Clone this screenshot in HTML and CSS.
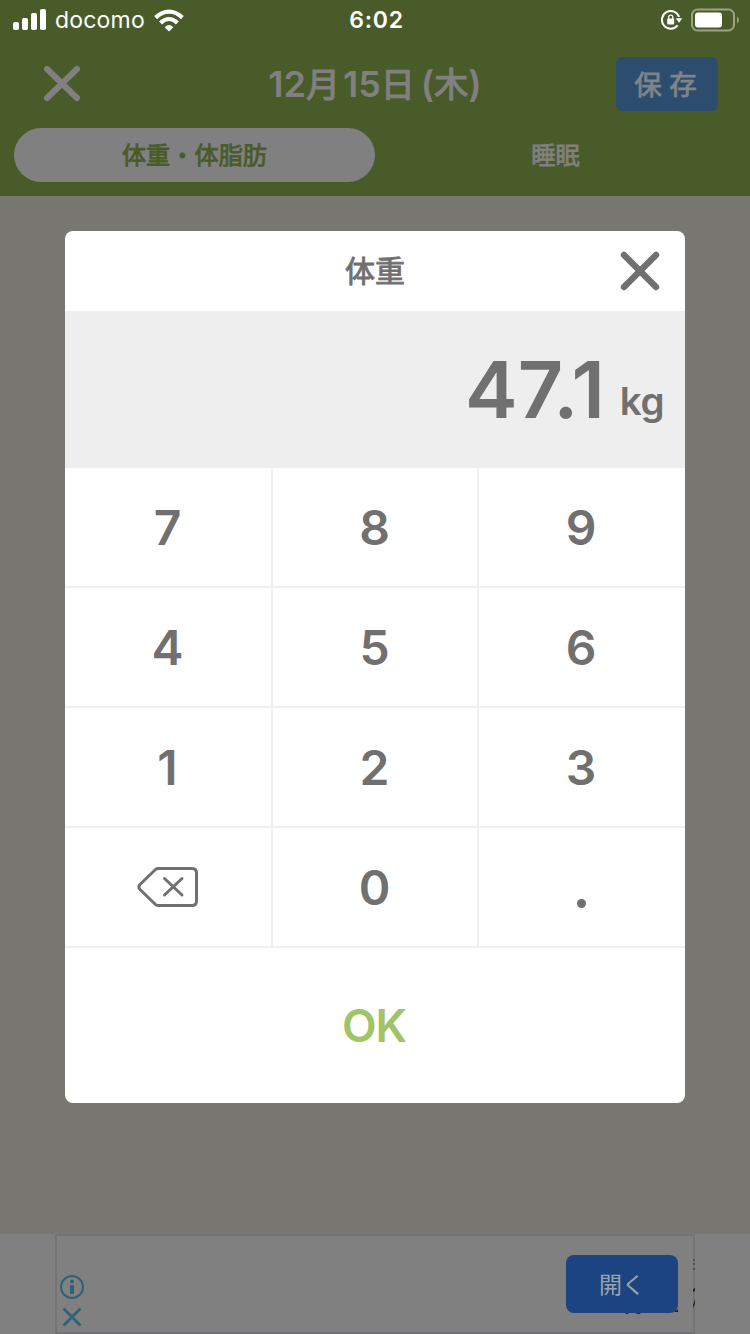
FILE: index.html
```html
<!DOCTYPE html>
<html lang="ja">
<head>
<meta charset="utf-8">
<title>体重</title>
<link rel="stylesheet" href="styles.css">
</head>
<body>
<div class="screen">
  <header class="header">
    <div class="status">
      <div class="status-left">
        <svg class="signal" width="33" height="22" viewBox="0 0 33 22" fill="#fff"><rect x="0" y="13" width="6" height="8" rx="1.8"/><rect x="9" y="9" width="6" height="12" rx="1.8"/><rect x="18" y="4" width="6" height="17" rx="1.8"/><rect x="27" y="0" width="6" height="21" rx="1.8"/></svg>
        <span class="carrier">docomo</span>
        <svg class="wifi" width="30" height="23" viewBox="0 0 30 23" fill="none" stroke="#fff" stroke-width="4.2"><path d="M1.6 8.6Q8 2.6 15 2.6T28.4 8.6"/><path d="M6.6 14Q10.5 10 15 10T23.4 14"/><path d="M10.6 18.2Q15 14 19.4 18.2L15 22.6Z" fill="#fff" stroke="none"/></svg>
      </div>
      <span class="clock">6:02</span>
      <div class="status-right">
        <svg width="22" height="20" viewBox="0 0 22 20"><path d="M18.1 7A8.8 8.8 0 1 0 16.6 15.4" fill="none" stroke="#fff" stroke-width="2"/><path d="M14.6 8.2H21.3L18.1 12.8Z" fill="#fff"/><rect x="6.2" y="8.4" width="7" height="6" rx="1" fill="#fff"/><path d="M7.6 9V7.2a2.1 2.1 0 0 1 4.2 0V9" fill="none" stroke="#fff" stroke-width="1.3"/></svg>
        <svg width="50" height="24" viewBox="0 0 50 24"><rect x="2" y="1.5" width="42" height="21" rx="5.5" fill="none" stroke="#99a484" stroke-width="2"/><rect x="5" y="4.5" width="27" height="15" rx="3" fill="#fff"/><path d="M47 8.5C49.5 9.5 49.5 14.500 47 15.500Z" fill="#99a484"/></svg>
      </div>
    </div>
    <div class="nav">
      <svg class="nav-close" width="40" height="40" viewBox="0 0 40 40" stroke="#808080" stroke-width="6" stroke-linecap="round"><path d="M5 5L35 34M35 5L5 34"/></svg>
      <h1 class="date"><span>12</span><span class="kanji">月</span><span class="day">15</span><span class="kanji">日</span><span class="paren">(</span><span class="kanji">木</span><span>)</span></h1>
      <button class="save">保 存</button>
    </div>
    <div class="tabs">
      <div class="tab tab-active">体重・体脂肪</div>
      <div class="tab">睡眠</div>
    </div>
  </header>
  <main class="content">
    <section class="modal">
      <div class="modal-head">
        <h2 class="modal-title">体重</h2>
        <svg class="modal-close" width="40" height="40" viewBox="0 0 40 40" stroke="#707070" stroke-width="6.4" stroke-linecap="round"><path d="M4 4L36 36M36 4L4 36"/></svg>
      </div>
      <div class="display"><span class="value">47.1</span><span class="unit">kg</span></div>
      <div class="keys">
        <div class="key">7</div><div class="key">8</div><div class="key">9</div>
        <div class="key">4</div><div class="key">5</div><div class="key">6</div>
        <div class="key">1</div><div class="key">2</div><div class="key">3</div>
        <div class="key"><svg width="62" height="42" viewBox="0 0 62 42" fill="none" stroke="#707070" stroke-width="3" stroke-linejoin="round" stroke-linecap="round"><path d="M21 2.500H55Q59.500 2.500 59.500 7V35Q59.500 39.500 55 39.500H21Q19.500 39.500 18.500 38.500L3 23.500Q0.800 21 3 18.500L18.500 3.500Q19.500 2.500 21 2.500Z"/><path d="M27.500 12.500L45 29M45 12.500L27.500 29"/></svg></div><div class="key">0</div><div class="key"><span class="dot"></span></div>
      </div>
      <div class="ok">OK</div>
    </section>
  </main>
  <footer class="ad">
    <div class="banner">
      <div class="ad-icons">
        <svg width="26" height="26" viewBox="0 0 26 26"><circle cx="13" cy="13" r="11" fill="none" stroke="#2d6377" stroke-width="2"/><circle cx="13" cy="7.500" r="2" fill="#2d6377"/><path d="M11 11h4v9h-4z" fill="#2d6377"/></svg>
        <svg width="26" height="26" viewBox="0 0 26 26" stroke="#2d6377" stroke-width="2.600"><path d="M4.500 4.500L21.500 21.500M21.500 4.500L4.500 21.500"/></svg>
      </div>
      <div class="open-wrap">
        <button class="open">開く</button>
        <svg class="remnant" width="130" height="64" viewBox="0 0 130 64" fill="#242424"><path d="M59 58h4l-2 1.200zM69 58h6l-2 1.200zM108 57l4-3v3z"/><path d="M127 5h2M127 9h2M127 14h2" stroke="#444" stroke-width="1.300"/><path d="M127 34l2-1v3l-2 1zM127 50l2-6v5l-2 4z"/></svg>
      </div>
    </div>
  </footer>
</div>
</body>
</html>
```
FILE: styles.css
```css
* { box-sizing: border-box; }
body { margin: 0; font-family: Inter, "Noto Sans CJK JP", sans-serif; }
h1, h2 { margin: 0; }
button { border: 0; padding: 0; font-family: inherit; }
svg { display: block; flex: none; }
.screen { width: 750px; height: 1334px; display: flex; flex-direction: column; overflow: hidden; background: #787772; }
.header { height: 196px; background: #4a5b2a; flex: none; }
.status { height: 40px; display: grid; grid-template-columns: 1fr auto 1fr; align-items: center; padding: 0 10px 0 13px; color: #fff; }
.status-left { display: flex; align-items: center; }
.carrier { font-size: 23px; line-height: 40px; letter-spacing: 0.2px; margin-left: 9px; }
.wifi { margin-left: 9px; }
.clock { font-size: 23px; font-weight: 600; line-height: 40px; letter-spacing: 0.7px; }
.status-right { display: flex; align-items: center; justify-content: flex-end; gap: 7px; }
.nav { height: 88px; display: grid; grid-template-columns: 1fr auto 1fr; align-items: center; padding: 0 32px 0 42px; }
.date { display: flex; align-items: center; font-size: 36px; line-height: 50px; font-weight: 600; color: #808080; margin-right: 10px; }
.kanji { font-weight: 400; font-size: 34px; -webkit-text-stroke: 1.200px; padding-top: 1px; }
.day { margin-left: 3px; }
.paren { margin-left: 6px; }
.save { justify-self: end; width: 102px; height: 54px; border-radius: 6px; background: #2c4d6e; color: #808488; font-size: 27.500px; font-weight: 400; -webkit-text-stroke: 0.800px; padding: 0 3px 2px 0; }
.tabs { display: grid; grid-template-columns: 361px 361px; padding-left: 14px; }
.tab { height: 54px; line-height: 56px; border-radius: 27px; text-align: center; font-size: 24.200px; font-weight: 400; -webkit-text-stroke: 0.800px; color: #808080; }
.tab-active { background: #808080; color: #4a5b2a; }
.content { flex: 1; padding: 35px 65px 0; }
.modal { height: 872px; border-radius: 8px; background: #fff; overflow: hidden; color: #707070; }
.modal-head { height: 80px; display: grid; grid-template-columns: 1fr auto 1fr; align-items: center; padding: 0 25px; }
.modal-title { grid-column: 2; font-size: 30px; line-height: 60px; font-weight: 400; -webkit-text-stroke: 0.900px; }
.modal-close { justify-self: end; }
.display { height: 157px; background: #eee; border-bottom: 1px solid #f0f0f0; display: flex; justify-content: flex-end; align-items: flex-start; padding: 30px 21px 0 0; font-weight: 600; }
.value { font-size: 79px; line-height: 96px; }
.unit { font-size: 38.500px; line-height: 48px; margin: 36px 0 0 15px; letter-spacing: -0.500px; }
.keys { display: grid; grid-template-columns: 208px 206px 206px; grid-auto-rows: 120px; }
.key { display: flex; align-items: center; justify-content: center; font-size: 48px; font-weight: 600; border-bottom: 2px solid #f0f0f0; border-right: 2px solid #f0f0f0; padding-right: 1px; }
.key:nth-child(3n) { border-right: 0; padding-right: 2px; }
.dot { width: 9px; height: 9px; border-radius: 50%; background: #707070; margin-top: 33px; }
.ok { height: 155px; line-height: 155px; text-align: center; font-size: 45px; letter-spacing: -1px; padding-right: 2px; font-weight: 600; color: #a0c566; }
.ad { height: 100px; background: #808080; flex: none; padding-left: 55px; }
.banner { width: 640px; height: 100px; border: 2px solid #747476; display: flex; justify-content: space-between; }
.ad-icons { display: flex; flex-direction: column; gap: 4px; padding: 38px 0 0 2px; }
.open-wrap { position: relative; padding: 19px 15px 0 0; }
.open { width: 112px; height: 58px; border-radius: 8px; background: #1c4480; color: #9aa3b2; font-size: 23px; padding: 0 0 2px; display: block; }
.remnant { position: absolute; left: 0; top: 19px; }
```
